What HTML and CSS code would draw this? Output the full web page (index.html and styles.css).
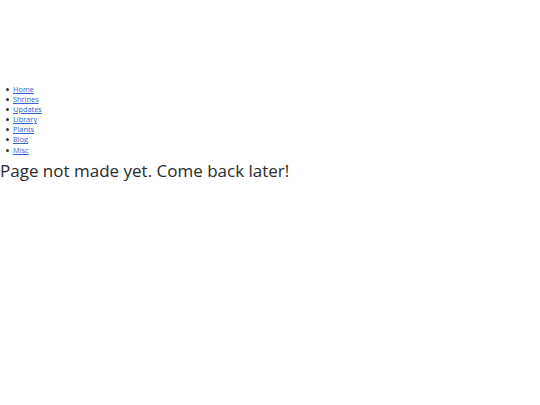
FILE: index.html
```html
<!DOCTYPE html>
<html>
<head>
<meta charset="utf-8">
<link rel="stylesheet" href="styles.css">
</head>
<body>
<div class="banner"></div>
<ul class="nav">
<li><a href="#">Home</a></li>
<li><a href="#">Shrines</a></li>
<li><a href="#">Updates</a></li>
<li><a href="#">Library</a></li>
<li><a href="#">Plants</a></li>
<li><a href="#">Blog</a></li>
<li><a href="#">Misc</a></li>
</ul>
<h1 class="title">Page not made yet. Come back later!</h1>
</body>
</html>
```
FILE: styles.css
```css
html, body {
  margin: 0;
  padding: 0;
  background: #fff;
  font-family: "Open Sans", "Noto Sans", sans-serif;
  color: #2b2b2b;
}
.banner {
  height: 84px;
}
.nav {
  margin: 0;
  padding-left: 6px;
  list-style: none;
  font-size: 7.4px;
  line-height: 10.1px;
}
.nav li::before {
  content: "";
  display: inline-block;
  width: 3px;
  height: 3px;
  background: #333;
  border-radius: 50%;
  margin-right: 4px;
  vertical-align: 1px;
}
.nav a {
  color: #2f66d2;
}
.title {
  margin: 4px 0 0 0;
  font-weight: 400;
  font-size: 17px;
  line-height: 23px;
  color: #2b2b2b;
}
```
